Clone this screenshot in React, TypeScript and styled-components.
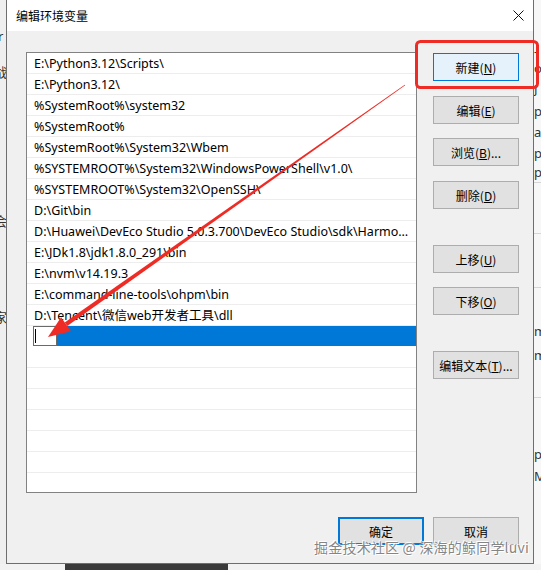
import React from "react";
import styled, { createGlobalStyle } from "styled-components";

const Global = createGlobalStyle`
  html, body { margin: 0; padding: 0; background: #f0f0f0; }
  body {
    font-family: "Noto Sans", "Noto Sans CJK SC", sans-serif;
    font-size: 12px;
    color: #000;
  }
  * { box-sizing: border-box; }
`;

const Desktop = styled.div`
  position: relative;
  width: 541px;
  height: 570px;
  overflow: hidden;
  display: grid;
  grid-template-columns: 6px 528px 7px;
  grid-template-rows: 564px 6px;
  background: #f0f0f0;
`;

const SideStrip = styled.div<{ $side: "left" | "right" }>`
  overflow: hidden;
  display: flex;
  flex-direction: column;
  background: ${(p) => (p.$side === "left" ? "#efefef" : "#f7f7f7")};
  color: #333;
  font-size: 13px;
  line-height: 1;
`;

const Fragment = styled.div<{ $gap: number; $shift?: number; $line?: boolean }>`
  margin-top: ${(p) => p.$gap}px;
  margin-left: ${(p) => p.$shift ?? 0}px;
  white-space: nowrap;
  height: ${(p) => (p.$line ? 1 : 14)}px;
  background: ${(p) => (p.$line ? "#d6d6d6" : "transparent")};
  width: ${(p) => (p.$line ? "100%" : "auto")};
`;

const BottomStrip = styled.div`
  grid-column: 1 / 4;
  display: flex;
  background: #f2f2f2;
`;

const DarkBlock = styled.div`
  margin-left: 65px;
  width: 163px;
  background: #3a3a3a;
`;

const Dialog = styled.div`
  display: flex;
  flex-direction: column;
  border-left: 1px solid #6e6e6e;
  border-right: 1px solid #6e6e6e;
  border-bottom: 1px solid #6e6e6e;
  background: #f0f0f0;
`;

const TitleBar = styled.div`
  height: 31px;
  background: #fff;
  display: flex;
  align-items: center;
  justify-content: space-between;
  padding: 0 9px 1px 9px;
  font-size: 12px;
`;

const Title = styled.span`
  font-family: "Noto Sans CJK SC", sans-serif;
`;

const CloseIcon = styled.svg`
  width: 11px;
  height: 11px;
`;

const Body = styled.div`
  flex: 1;
  display: flex;
  flex-direction: column;
  padding: 21px 14px 18px 19px;
`;

const MainRow = styled.div`
  display: flex;
  gap: 16px;
`;

const List = styled.div`
  width: 391px;
  height: 441px;
  border: 1px solid #828282;
  background: #fff;
  overflow: hidden;
  display: flex;
  flex-direction: column;
`;

const Row = styled.div`
  flex: none;
  height: 21px;
  line-height: 21px;
  font-size: 12.5px;
  border-bottom: 1px solid #ededed;
  padding: 0 3px 0 7px;
  white-space: nowrap;
  overflow: hidden;
  text-overflow: ellipsis;
`;

const EditRow = styled.div`
  flex: none;
  height: 21px;
  display: flex;
  padding-left: 6px;
  padding-bottom: 1px;
`;

const EditBox = styled.div`
  width: 24px;
  height: 20px;
  border: 1px solid #6a6a6a;
  background: #fff;
  display: flex;
  align-items: center;
  padding-left: 1px;
`;

const Caret = styled.div`
  width: 1px;
  height: 14px;
  background: #000;
`;

const Highlight = styled.div`
  flex: 1;
  background: #0078d7;
`;

const ButtonColumn = styled.div`
  display: flex;
  flex-direction: column;
`;

const WinButton = styled.button<{ $gap?: number; $variant?: "normal" | "hot" | "default" }>`
  margin-top: ${(p) => p.$gap ?? 0}px;
  width: 86px;
  height: 28px;
  padding: 0;
  font-family: "Noto Sans CJK SC", "Noto Sans", sans-serif;
  font-size: 12px;
  color: #000;
  background: ${(p) => (p.$variant === "hot" ? "#e5f1fb" : "#e1e1e1")};
  border: ${(p) =>
    p.$variant === "hot"
      ? "1px solid #0078d7"
      : p.$variant === "default"
      ? "2px solid #0078d7"
      : "1px solid #adadad"};
  display: flex;
  align-items: center;
  justify-content: center;
  cursor: default;
  u { text-decoration: underline; text-underline-offset: 1px; }
`;

const Footer = styled.div`
  margin-top: 24px;
  display: flex;
  justify-content: flex-end;
  gap: 9px;
`;

const Overlay = styled.svg`
  position: absolute;
  left: 0;
  top: 0;
  width: 541px;
  height: 570px;
  pointer-events: none;
`;

const Watermark = styled.div`
  position: absolute;
  right: 12px;
  bottom: 13px;
  font-family: "Noto Sans CJK SC", sans-serif;
  font-size: 14px;
  color: #858585;
  letter-spacing: 0.2px;
  text-shadow: 0 0 1px #fff, 0 0 2px #fff, 1px 1px 0 #fff, -1px -1px 0 #fff;
  pointer-events: none;
`;

const paths = [
  "E:\\Python3.12\\Scripts\\",
  "E:\\Python3.12\\",
  "%SystemRoot%\\system32",
  "%SystemRoot%",
  "%SystemRoot%\\System32\\Wbem",
  "%SYSTEMROOT%\\System32\\WindowsPowerShell\\v1.0\\",
  "%SYSTEMROOT%\\System32\\OpenSSH\\",
  "D:\\Git\\bin",
  "D:\\Huawei\\DevEco Studio 5.0.3.700\\DevEco Studio\\sdk\\HarmonyOS-NEXT-DB1\\openharmony\\toolchains",
  "E:\\JDk1.8\\jdk1.8.0_291\\bin",
  "E:\\nvm\\v14.19.3",
  "E:\\command-line-tools\\ohpm\\bin",
  "D:\\Tencent\\微信web开发者工具\\dll",
];

const sideButtons: { label: string; key: string; suffix?: string; gap: number; variant?: "hot" }[] = [
  { label: "新建", key: "N", gap: 1, variant: "hot" },
  { label: "编辑", key: "E", gap: 15 },
  { label: "浏览", key: "B", suffix: "...", gap: 14 },
  { label: "删除", key: "D", gap: 15 },
  { label: "上移", key: "U", gap: 36 },
  { label: "下移", key: "O", gap: 14 },
  { label: "编辑文本", key: "T", suffix: "...", gap: 36 },
];

// arrow geometry
const tip = { x: 48, y: 337 };
const start = { x: 405, y: 85 };
const dx = tip.x - start.x;
const dy = tip.y - start.y;
const len = Math.hypot(dx, dy);
const ux = dx / len;
const uy = dy / len;
const nx = -uy;
const ny = ux;
const headLen = 22;
const headHalf = 8.5;
const base = { x: tip.x - headLen * ux, y: tip.y - headLen * uy };
const shaft = [
  [start.x + 0.4 * nx, start.y + 0.4 * ny],
  [base.x + 2.2 * nx, base.y + 2.2 * ny],
  [base.x - 2.2 * nx, base.y - 2.2 * ny],
  [start.x - 0.4 * nx, start.y - 0.4 * ny],
]
  .map((p) => p.join(","))
  .join(" ");
const head = [
  [tip.x, tip.y],
  [base.x + headHalf * nx, base.y + headHalf * ny],
  [base.x - headHalf * nx, base.y - headHalf * ny],
]
  .map((p) => p.join(","))
  .join(" ");

export default function App() {
  return (
    <>
      <Global />
      <Desktop>
        <SideStrip $side="left">
          <Fragment $gap={30} $shift={-2}>r</Fragment>
          <Fragment $gap={22} $shift={-6}>战</Fragment>
          <Fragment $gap={135} $shift={-6}>会</Fragment>
          <Fragment $gap={82} $shift={-6}>家</Fragment>
        </SideStrip>
        <Dialog>
          <TitleBar>
            <Title>编辑环境变量</Title>
            <CloseIcon viewBox="0 0 11 11">
              <path d="M0.5 0.5 L10.5 10.5 M10.5 0.5 L0.5 10.5" stroke="#111" strokeWidth="1" fill="none" />
            </CloseIcon>
          </TitleBar>
          <Body>
            <MainRow>
              <List>
                {paths.map((p) => (
                  <Row key={p}>{p}</Row>
                ))}
                <EditRow>
                  <EditBox>
                    <Caret />
                  </EditBox>
                  <Highlight />
                </EditRow>
                {Array.from({ length: 7 }).map((_, i) => (
                  <Row key={"e" + i} />
                ))}
              </List>
              <ButtonColumn>
                {sideButtons.map((b) => (
                  <WinButton key={b.label} $gap={b.gap} $variant={b.variant}>
                    {b.label}(<u>{b.key}</u>){b.suffix ?? ""}
                  </WinButton>
                ))}
              </ButtonColumn>
            </MainRow>
            <Footer>
              <WinButton $variant="default">确定</WinButton>
              <WinButton>取消</WinButton>
            </Footer>
          </Body>
        </Dialog>
        <SideStrip $side="right">
          <Fragment $gap={45}>-</Fragment>
          <Fragment $gap={3}>o</Fragment>
          <Fragment $gap={7}>J</Fragment>
          <Fragment $gap={8}>p</Fragment>
          <Fragment $gap={7}>ar</Fragment>
          <Fragment $gap={7}>p</Fragment>
          <Fragment $gap={5}>p</Fragment>
          <Fragment $gap={2} $line />
          <Fragment $gap={50} $line />
          <Fragment $gap={53} $line />
          <Fragment $gap={37}>m</Fragment>
          <Fragment $gap={10}>m</Fragment>
          <Fragment $gap={34} $line />
          <Fragment $gap={50}>p</Fragment>
          <Fragment $gap={8}>M</Fragment>
        </SideStrip>
        <BottomStrip>
          <DarkBlock />
        </BottomStrip>
        <Overlay viewBox="0 0 541 570">
          <rect x="416.5" y="41.5" width="121" height="46" rx="4" fill="none" stroke="#ee2b24" strokeWidth="3" />
          <polygon points={shaft} fill="#ee2b24" />
          <polygon points={head} fill="#ee2b24" />
        </Overlay>
        <Watermark>掘金技术社区 @ 深海的鲸同学luvi</Watermark>
      </Desktop>
    </>
  );
}
